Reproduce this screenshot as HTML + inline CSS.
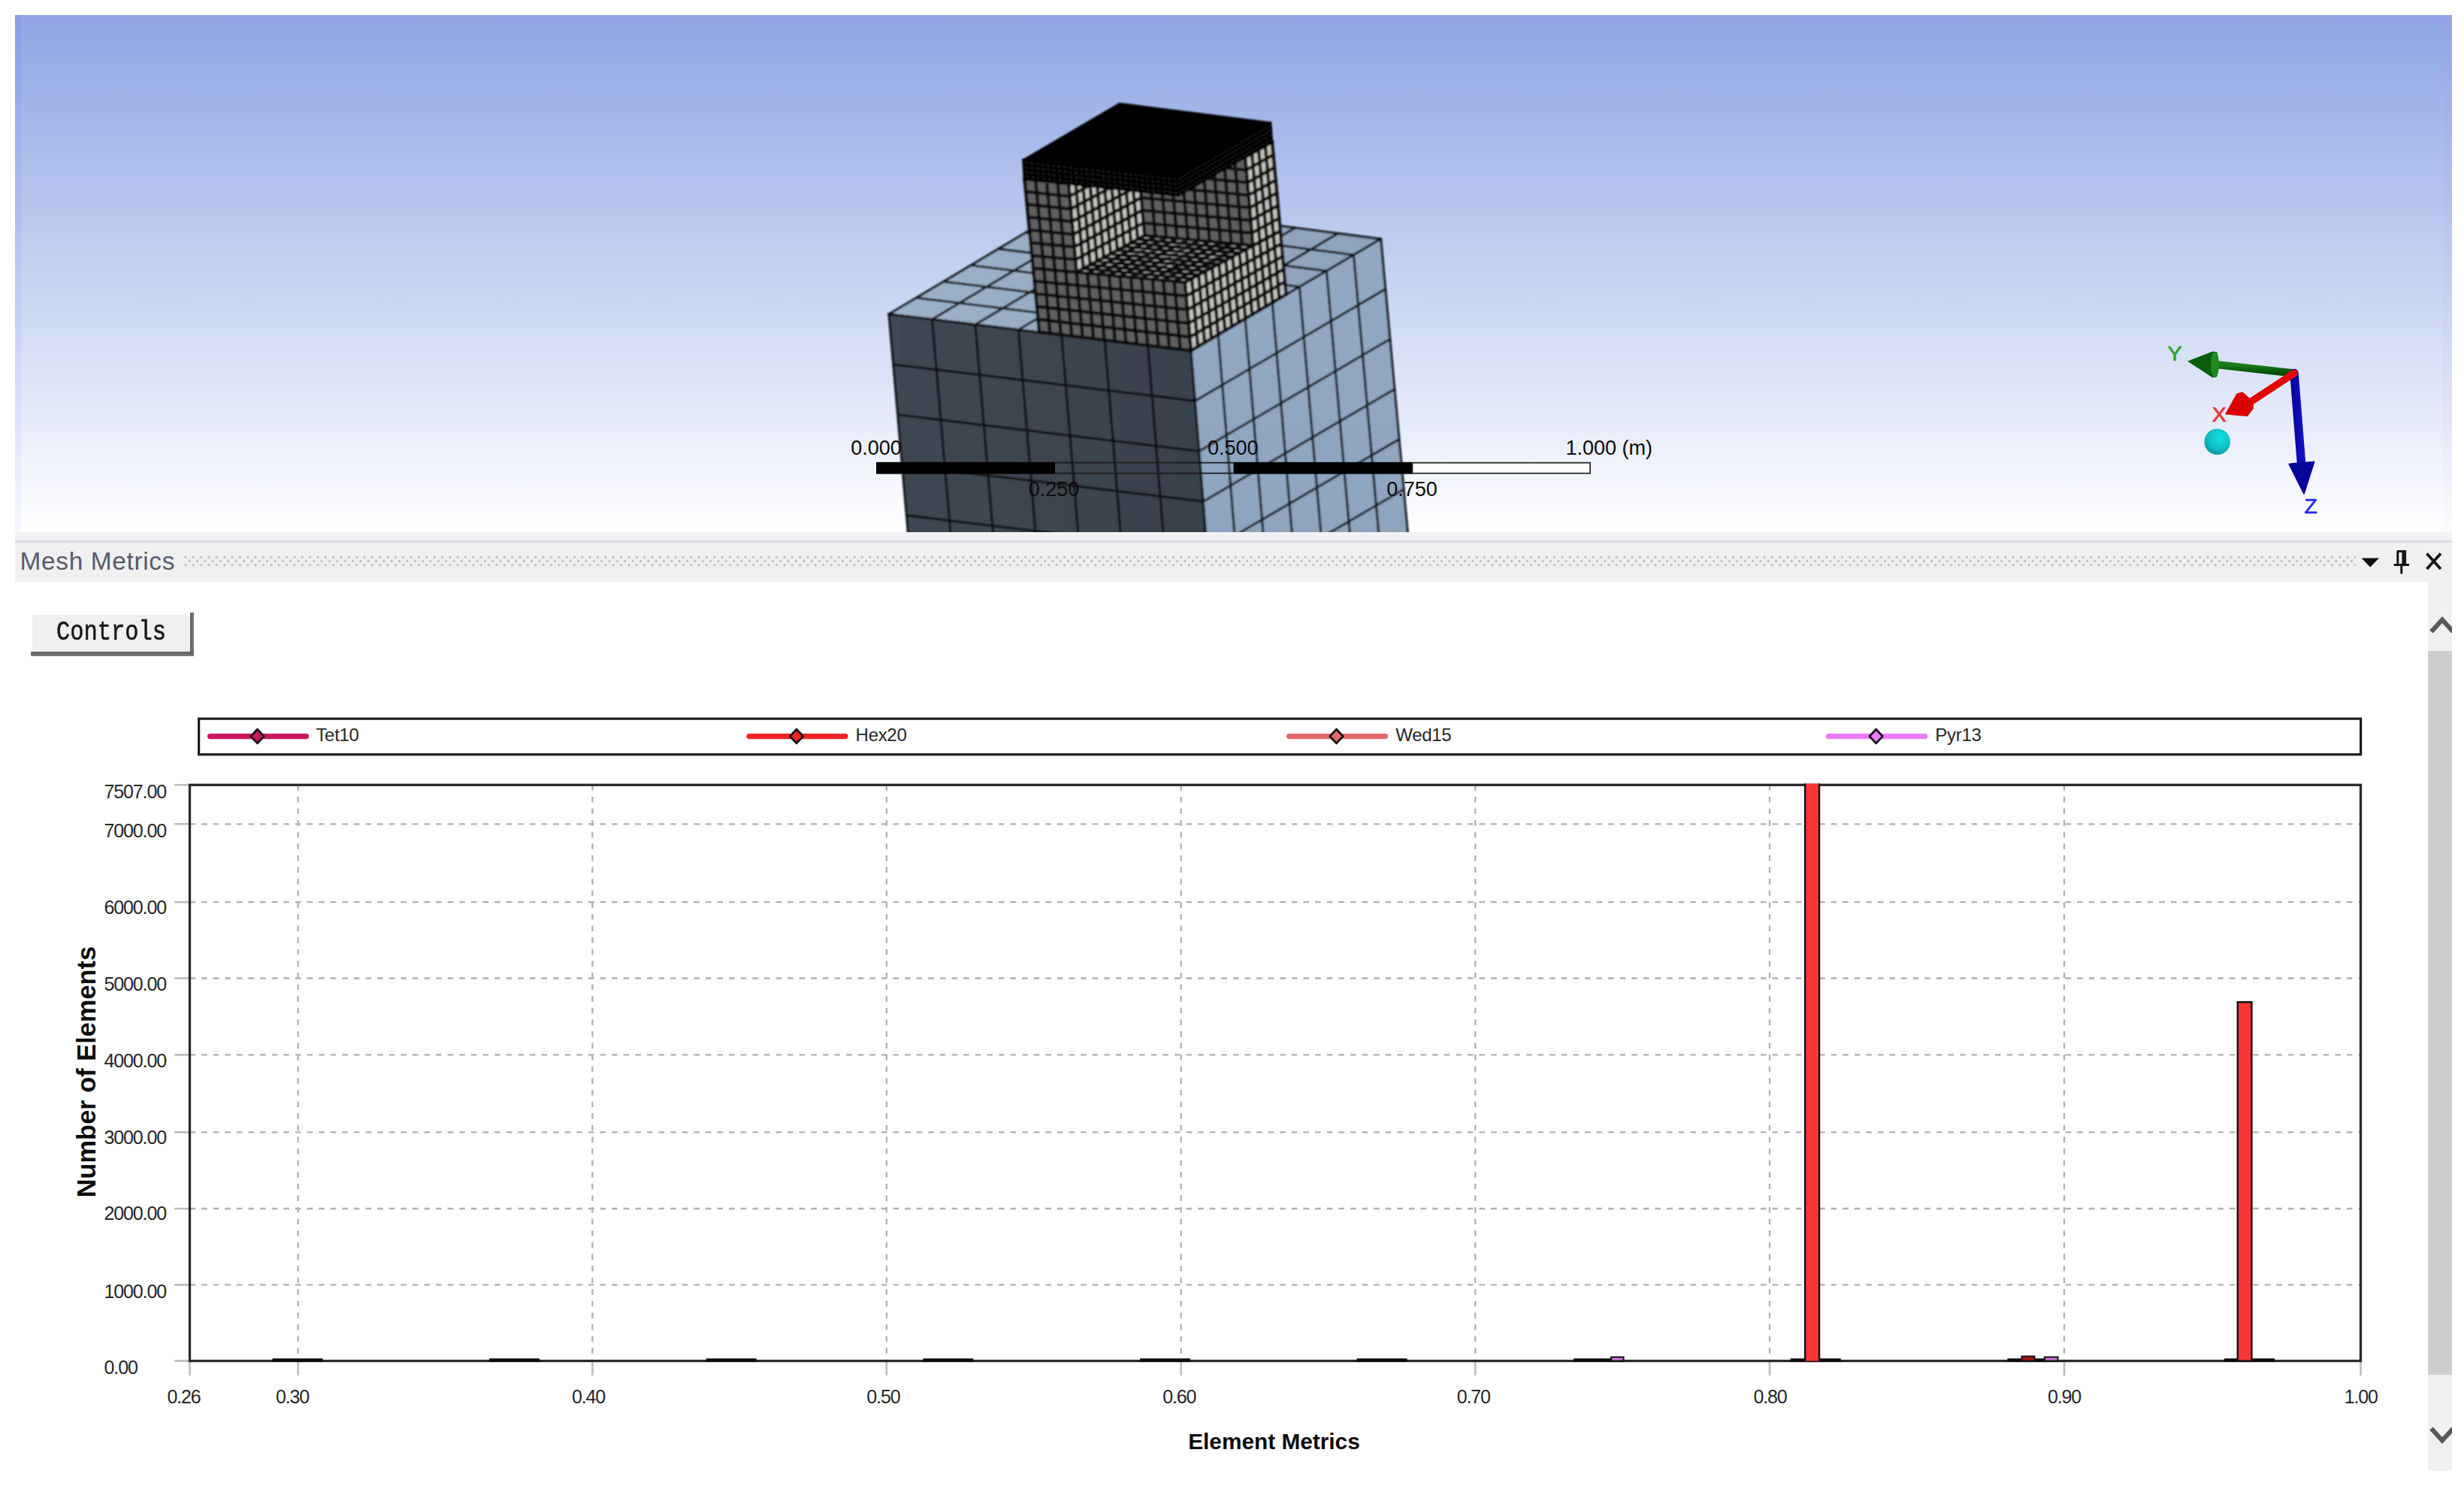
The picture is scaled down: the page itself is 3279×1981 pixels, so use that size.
<!DOCTYPE html>
<html lang="en">
<head>
<meta charset="utf-8">
<title>Mesh Metrics</title>
<style>
html,body{margin:0;padding:0;background:#fff;}
body{width:3279px;height:1981px;position:relative;overflow:hidden;font-family:"Liberation Sans",sans-serif;color:#1a1a1a;}
.abs{position:absolute;}
#viewport{left:20px;top:20px;width:3243px;height:688px;background:linear-gradient(180deg,#8da5e4 0%,#ffffff 100%);overflow:hidden;}
#gfx{left:0;top:0;width:3279px;height:1981px;}
.sb{font-size:27px;line-height:27px;color:#0b0b0b;white-space:nowrap;transform:translateX(-50%);}
.sbl{font-size:27px;line-height:27px;color:#0b0b0b;white-space:nowrap;}
.ax{font-size:29px;line-height:29px;font-weight:bold;white-space:nowrap;}
#titlebar{left:20px;top:708px;width:3243px;height:66px;background:#f0f0f1;}
#titlebar .strip{left:0;top:0;width:100%;height:12px;background:#f2f2f5;}
#titlebar .rule{left:0;top:11.2px;width:100%;height:2.6px;background:#d9dae4;}
#title{left:6.6px;top:21.1px;font-size:33.4px;line-height:36px;letter-spacing:0.66px;color:#565b6d;white-space:nowrap;}
#grip{left:224.6px;top:32px;width:2890px;height:15px;}
#panel{left:20px;top:774px;width:3211px;height:1183px;background:#fff;}
#controls{left:43.2px;top:817.8px;width:209.5px;height:49.2px;background:#efefef;}
#controls span{position:absolute;left:31.8px;top:6.6px;font-family:"Liberation Mono",monospace;font-weight:normal;-webkit-text-stroke:0.5px #161616;font-size:30.4px;line-height:34px;color:#161616;transform-origin:0 50%;transform:scaleY(1.2);white-space:nowrap;}
#csr{left:252.7px;top:815.4px;width:5.2px;height:57.2px;background:linear-gradient(90deg,#5e5e5e,#7c7c7c);}
#csb{left:41.4px;top:867px;width:216.5px;height:5.6px;background:linear-gradient(180deg,#5e5e5e,#7c7c7c);}
#scroll{left:3231px;top:774px;width:32px;height:1183px;background:#f0f0f0;}
#thumb{left:0;top:92px;width:32px;height:963px;background:#cdcdcd;}
.yl{left:138.6px;font-size:25px;line-height:25px;letter-spacing:-1.15px;color:#262626;white-space:nowrap;}
.xl{top:1845.6px;font-size:25px;line-height:25px;letter-spacing:-1.15px;color:#262626;white-space:nowrap;transform:translateX(-50%);}
.lg{top:966.2px;font-size:24px;line-height:24px;letter-spacing:-0.3px;color:#262626;white-space:nowrap;}
#ytitle{left:0;top:0;font-size:34.4px;line-height:34px;font-weight:bold;color:#0c0c0c;white-space:nowrap;transform-origin:0 0;}
#xtitle{left:1581.2px;top:1902px;font-size:29.8px;line-height:32px;font-weight:bold;color:#0c0c0c;white-space:nowrap;}
.tl{font-weight:normal;font-size:28.5px;line-height:28px;-webkit-text-stroke:0.7px currentColor;}
</style>
</head>
<body>

<div id="viewport" class="abs"><div class="abs" style="left:0;top:0;width:100%;height:10px;background:rgba(186,150,240,0.17)"></div><div class="abs" style="left:0;top:0;width:8px;height:100%;background:linear-gradient(180deg,rgba(112,120,232,0.16),rgba(112,120,232,0.05))"></div><div class="abs" style="right:0;top:0;width:12px;height:100%;background:linear-gradient(180deg,rgba(176,150,240,0.16),rgba(176,150,240,0.04))"></div></div>
<div id="titlebar" class="abs"><div class="abs strip"></div><div class="abs rule"></div>
<div id="title" class="abs">Mesh Metrics</div>
<svg id="grip" class="abs" viewBox="0 0 2890 15"><defs><pattern id="dots" width="10.35" height="10.4" patternUnits="userSpaceOnUse"><rect x="0.6" y="0" width="2.7" height="2.7" fill="#b4b4bc"/><rect x="5.8" y="5.2" width="2.7" height="2.7" fill="#b4b4bc"/></pattern></defs><rect x="0" y="0" width="2890" height="13.2" fill="url(#dots)"/></svg>
</div>
<div id="panel" class="abs"></div>
<div id="scroll" class="abs"><div id="thumb" class="abs"></div></div>
<svg id="gfx" class="abs" viewBox="0 0 3279 1981">
<defs>
<linearGradient id="gTop" x1="0" y1="0" x2="1" y2="0"><stop offset="0" stop-color="#9db2c8"/><stop offset="1" stop-color="#8ea2b9"/></linearGradient>
<linearGradient id="gFront" x1="0" y1="0" x2="1" y2="0"><stop offset="0" stop-color="#3f4852"/><stop offset="1" stop-color="#39424c"/></linearGradient>
<linearGradient id="gRight" x1="0" y1="0" x2="0" y2="1"><stop offset="0" stop-color="#93a8c2"/><stop offset="1" stop-color="#8ea4be"/></linearGradient>

<clipPath id="vp"><rect x="20" y="20" width="3243" height="687.9"/></clipPath>
<clipPath id="sbc"><rect x="3231" y="774" width="32" height="1183"/></clipPath>
<filter id="soft" x="-2%" y="-2%" width="104%" height="104%"><feGaussianBlur stdDeviation="0.85"/></filter>
<linearGradient id="gGreen" x1="0" y1="0" x2="0" y2="1"><stop offset="0" stop-color="#1c7e1c"/><stop offset="1" stop-color="#064f06"/></linearGradient>
<linearGradient id="gBlue" x1="0" y1="0" x2="1" y2="0"><stop offset="0" stop-color="#0505a0"/><stop offset="1" stop-color="#1212c2"/></linearGradient>
<radialGradient id="gCyan" cx="0.6" cy="0.35" r="0.75"><stop offset="0" stop-color="#14e0e6"/><stop offset="0.55" stop-color="#10c0c6"/><stop offset="1" stop-color="#0a8f96"/></radialGradient>
</defs>
<g clip-path="url(#vp)">
<g filter="url(#soft)"><polygon points="1183.0,418.0 1585.0,466.5 1837.5,318.0 1438.0,266.0" fill="url(#gTop)" />
<path d="M1183.0,418.0L1438.0,266.0M1240.4,424.9L1495.1,273.4M1297.9,431.9L1552.1,280.9M1355.3,438.8L1609.2,288.3M1412.7,445.7L1666.3,295.7M1470.1,452.6L1723.4,303.1M1527.6,459.6L1780.4,310.6M1585.0,466.5L1837.5,318.0M1183.0,418.0L1585.0,466.5M1219.4,396.3L1621.1,445.3M1255.9,374.6L1657.1,424.1M1292.3,352.9L1693.2,402.9M1328.7,331.1L1729.3,381.6M1365.1,309.4L1765.4,360.4M1401.6,287.7L1801.4,339.2M1438.0,266.0L1837.5,318.0" stroke="#070b10" stroke-width="3.0" fill="none" stroke-linecap="square"/>
<polygon points="1183.0,418.0 1585.0,466.5 1617.4,867.9 1218.1,819.4" fill="url(#gFront)" />
<path d="M1183.0,418.0L1218.1,819.4M1240.4,424.9L1275.1,826.3M1297.9,431.9L1332.2,833.3M1355.3,438.8L1389.2,840.2M1412.7,445.7L1446.3,847.1M1470.1,452.6L1503.3,854.0M1527.6,459.6L1560.4,861.0M1585.0,466.5L1617.4,867.9M1183.0,418.0L1585.0,466.5M1188.8,484.9L1590.4,533.4M1194.7,551.8L1595.8,600.3M1200.5,618.7L1601.2,667.2M1206.4,685.6L1606.6,734.1M1212.2,752.5L1612.0,801.0M1218.1,819.4L1617.4,867.9" stroke="#070b10" stroke-width="3.0" fill="none" stroke-linecap="square"/>
<polygon points="1585.0,466.5 1837.5,318.0 1874.1,717.6 1617.4,867.9" fill="url(#gRight)" />
<path d="M1585.0,466.5L1617.4,867.9M1621.1,445.3L1654.1,846.4M1657.1,424.1L1690.7,825.0M1693.2,402.9L1727.4,803.5M1729.3,381.6L1764.1,782.0M1765.4,360.4L1800.8,760.5M1801.4,339.2L1837.4,739.1M1837.5,318.0L1874.1,717.6M1585.0,466.5L1837.5,318.0M1590.4,533.4L1843.6,384.6M1595.8,600.3L1849.7,451.2M1601.2,667.2L1855.8,517.8M1606.6,734.1L1861.9,584.4M1612.0,801.0L1868.0,651.0M1617.4,867.9L1874.1,717.6" stroke="#070b10" stroke-width="3.0" fill="none" stroke-linecap="square"/>
<polygon points="1512.5,195.6 1657.2,209.3 1667.5,326.8 1523.1,313.5" fill="#616161" />
<path d="M1512.5,195.6L1523.1,313.5M1527.0,196.9L1537.5,314.8M1541.4,198.3L1552.0,316.1M1555.9,199.7L1566.4,317.5M1570.4,201.1L1580.9,318.8M1584.8,202.4L1595.3,320.1M1599.3,203.8L1609.7,321.5M1613.8,205.2L1624.2,322.8M1628.2,206.5L1638.6,324.1M1642.7,207.9L1653.0,325.5M1657.2,209.3L1667.5,326.8M1512.5,195.6L1657.2,209.3M1514.0,212.4L1658.6,226.1M1515.5,229.3L1660.1,242.9M1517.0,246.1L1661.6,259.6M1518.6,263.0L1663.1,276.4M1520.1,279.8L1664.5,293.2M1521.6,296.6L1666.0,310.0M1523.1,313.5L1667.5,326.8" stroke="#0e0e0e" stroke-width="4.4" fill="none" stroke-linecap="square"/>
<polygon points="1422.0,244.3 1512.5,195.6 1523.1,313.5 1432.6,362.2" fill="#c4c4bf" />
<path d="M1422.0,244.3L1432.6,362.2M1431.1,239.4L1441.7,357.3M1440.1,234.5L1450.7,352.5M1449.2,229.7L1459.8,347.6M1458.2,224.8L1468.8,342.7M1467.3,219.9L1477.9,337.8M1476.3,215.1L1486.9,333.0M1485.3,210.2L1496.0,328.1M1494.4,205.3L1505.0,323.2M1503.4,200.4L1514.1,318.4M1512.5,195.6L1523.1,313.5M1422.0,244.3L1512.5,195.6M1423.5,261.1L1514.0,212.4M1425.0,278.0L1515.5,229.3M1426.6,294.8L1517.0,246.1M1428.1,311.7L1518.6,263.0M1429.6,328.5L1520.1,279.8M1431.1,345.4L1521.6,296.6M1432.6,362.2L1523.1,313.5" stroke="#0e0e0e" stroke-width="4.4" fill="none" stroke-linecap="square"/>
<polygon points="1432.6,362.2 1523.1,313.5 1667.5,326.8 1577.0,375.5" fill="#bebebb" />
<path d="M1432.6,362.2L1577.0,375.5M1441.7,357.3L1586.0,370.6M1450.7,352.5L1595.1,365.8M1459.8,347.6L1604.1,360.9M1468.8,342.7L1613.2,356.0M1477.9,337.8L1622.2,351.1M1486.9,333.0L1631.3,346.3M1496.0,328.1L1640.3,341.4M1505.0,323.2L1649.4,336.5M1514.1,318.4L1658.4,331.7M1523.1,313.5L1667.5,326.8M1432.6,362.2L1523.1,313.5M1447.1,363.5L1537.5,314.8M1461.5,364.9L1552.0,316.1M1475.9,366.2L1566.4,317.5M1490.4,367.5L1580.9,318.8M1504.8,368.9L1595.3,320.1M1519.2,370.2L1609.7,321.5M1533.7,371.5L1624.2,322.8M1548.1,372.8L1638.6,324.1M1562.6,374.2L1653.0,325.5M1577.0,375.5L1667.5,326.8" stroke="#0e0e0e" stroke-width="4.4" fill="none" stroke-linecap="square"/>
<polygon points="1363.5,238.0 1422.0,244.3 1432.6,362.2 1374.9,356.9" fill="#616161" />
<path d="M1363.5,238.0L1374.9,356.9M1378.1,239.6L1389.3,358.2M1392.8,241.1L1403.8,359.5M1407.4,242.7L1418.2,360.9M1422.0,244.3L1432.6,362.2M1363.5,238.0L1422.0,244.3M1365.1,255.0L1423.5,261.1M1366.8,272.0L1425.0,278.0M1368.4,288.9L1426.6,294.8M1370.0,305.9L1428.1,311.7M1371.6,322.9L1429.6,328.5M1373.2,339.9L1431.1,345.4M1374.9,356.9L1432.6,362.2" stroke="#0e0e0e" stroke-width="4.4" fill="none" stroke-linecap="square"/>
<polygon points="1374.9,356.9 1577.0,375.5 1585.0,466.5 1383.0,441.8" fill="#616161" />
<path d="M1374.9,356.9L1383.0,441.8M1389.3,358.2L1397.4,443.6M1403.8,359.5L1411.9,445.3M1418.2,360.9L1426.3,447.1M1432.6,362.2L1440.7,448.9M1447.1,363.5L1455.1,450.6M1461.5,364.9L1469.6,452.4M1475.9,366.2L1484.0,454.1M1490.4,367.5L1498.4,455.9M1504.8,368.9L1512.9,457.7M1519.2,370.2L1527.3,459.4M1533.7,371.5L1541.7,461.2M1548.1,372.8L1556.1,463.0M1562.6,374.2L1570.6,464.7M1577.0,375.5L1585.0,466.5M1374.9,356.9L1577.0,375.5M1376.5,373.9L1578.6,393.7M1378.1,390.9L1580.2,411.9M1379.8,407.8L1581.8,430.1M1381.4,424.8L1583.4,448.3M1383.0,441.8L1585.0,466.5" stroke="#0e0e0e" stroke-width="4.4" fill="none" stroke-linecap="square"/>
<polygon points="1577.0,375.5 1703.7,307.3 1711.5,391.8 1585.0,466.5" fill="#c4c4bf" />
<path d="M1577.0,375.5L1585.0,466.5M1586.0,370.6L1594.0,461.2M1595.1,365.8L1603.1,455.8M1604.1,360.9L1612.1,450.5M1613.2,356.0L1621.1,445.2M1622.2,351.1L1630.2,439.8M1631.3,346.3L1639.2,434.5M1640.3,341.4L1648.2,429.1M1649.4,336.5L1657.3,423.8M1658.4,331.7L1666.3,418.5M1667.5,326.8L1675.4,413.1M1676.5,321.9L1684.4,407.8M1685.6,317.0L1693.4,402.5M1694.6,312.2L1702.5,397.1M1703.7,307.3L1711.5,391.8M1577.0,375.5L1703.7,307.3M1578.6,393.7L1705.2,324.2M1580.2,411.9L1706.8,341.1M1581.8,430.1L1708.4,358.0M1583.4,448.3L1709.9,374.9M1585.0,466.5L1711.5,391.8" stroke="#0e0e0e" stroke-width="4.4" fill="none" stroke-linecap="square"/>
<polygon points="1657.2,209.3 1692.7,189.0 1703.7,307.3 1667.5,326.8" fill="#c4c4bf" />
<path d="M1657.2,209.3L1667.5,326.8M1666.0,204.2L1676.5,321.9M1674.9,199.1L1685.6,317.0M1683.8,194.1L1694.6,312.2M1692.7,189.0L1703.7,307.3M1657.2,209.3L1692.7,189.0M1658.6,226.1L1694.3,205.9M1660.1,242.9L1695.8,222.8M1661.6,259.6L1697.4,239.7M1663.1,276.4L1699.0,256.6M1664.5,293.2L1700.5,273.5M1666.0,310.0L1702.1,290.4M1667.5,326.8L1703.7,307.3" stroke="#0e0e0e" stroke-width="4.4" fill="none" stroke-linecap="square"/>
<polygon points="1362.0,213.0 1566.5,236.0 1568.3,260.0 1363.5,238.0" fill="#1d1d1d" />
<path d="M1362.0,213.0L1363.5,238.0M1369.3,213.8L1370.8,238.8M1376.6,214.6L1378.1,239.6M1383.9,215.5L1385.4,240.4M1391.2,216.3L1392.8,241.1M1398.5,217.1L1400.1,241.9M1405.8,217.9L1407.4,242.7M1413.1,218.8L1414.7,243.5M1420.4,219.6L1422.0,244.3M1427.7,220.4L1429.3,245.1M1435.0,221.2L1436.6,245.9M1442.3,222.0L1444.0,246.6M1449.6,222.9L1451.3,247.4M1456.9,223.7L1458.6,248.2M1464.2,224.5L1465.9,249.0M1471.6,225.3L1473.2,249.8M1478.9,226.1L1480.5,250.6M1486.2,227.0L1487.8,251.4M1493.5,227.8L1495.2,252.1M1500.8,228.6L1502.5,252.9M1508.1,229.4L1509.8,253.7M1515.4,230.2L1517.1,254.5M1522.7,231.1L1524.4,255.3M1530.0,231.9L1531.7,256.1M1537.3,232.7L1539.0,256.9M1544.6,233.5L1546.4,257.6M1551.9,234.4L1553.7,258.4M1559.2,235.2L1561.0,259.2M1566.5,236.0L1568.3,260.0M1362.0,213.0L1566.5,236.0M1362.4,219.2L1567.0,242.0M1362.8,225.5L1567.4,248.0M1363.1,231.8L1567.8,254.0M1363.5,238.0L1568.3,260.0" stroke="#050505" stroke-width="3.6" fill="none" stroke-linecap="square"/>
<polygon points="1566.5,236.0 1690.8,163.5 1692.7,189.0 1568.3,260.0" fill="#202020" />
<path d="M1566.5,236.0L1568.3,260.0M1570.9,233.4L1572.7,257.5M1575.4,230.8L1577.2,254.9M1579.8,228.2L1581.6,252.4M1584.3,225.6L1586.1,249.9M1588.7,223.1L1590.5,247.3M1593.1,220.5L1595.0,244.8M1597.6,217.9L1599.4,242.2M1602.0,215.3L1603.8,239.7M1606.5,212.7L1608.3,237.2M1610.9,210.1L1612.7,234.6M1615.3,207.5L1617.2,232.1M1619.8,204.9L1621.6,229.6M1624.2,202.3L1626.1,227.0M1628.7,199.8L1630.5,224.5M1633.1,197.2L1634.9,222.0M1637.5,194.6L1639.4,219.4M1642.0,192.0L1643.8,216.9M1646.4,189.4L1648.3,214.4M1650.8,186.8L1652.7,211.8M1655.3,184.2L1657.2,209.3M1659.7,181.6L1661.6,206.8M1664.2,179.0L1666.0,204.2M1668.6,176.4L1670.5,201.7M1673.0,173.9L1674.9,199.1M1677.5,171.3L1679.4,196.6M1681.9,168.7L1683.8,194.1M1686.4,166.1L1688.3,191.5M1690.8,163.5L1692.7,189.0M1566.5,236.0L1690.8,163.5M1567.0,242.0L1691.3,169.9M1567.4,248.0L1691.8,176.2M1567.8,254.0L1692.2,182.6M1568.3,260.0L1692.7,189.0" stroke="#050505" stroke-width="3.0" fill="none" stroke-linecap="square"/>
<polygon points="1362.0,213.0 1490.0,138.0 1690.8,163.5 1566.5,236.0" fill="#000" stroke="#000" stroke-width="3" stroke-linejoin="round"/></g>
<rect x="1166.0" y="614.8" width="238.0" height="15.8" fill="#000"/>
<rect x="1641.5" y="614.8" width="238.0" height="15.8" fill="#000"/>
<path d="M1404.0,615.7H1641.5M1404.0,629.7H1641.5" stroke="#1a1a1a" stroke-width="1.8"/>
<rect x="1879.5" y="615.7" width="236.6" height="14.0" fill="#fdfdff" stroke="#2a2a2a" stroke-width="1.8"/>
<path d="M3053.0,496.5L2946,484.6" stroke="url(#gGreen)" stroke-width="10.5" stroke-linecap="round"/>
<polygon points="2911,480.4 2944.5,467.5 2950.5,468.5 2953,485 2950.5,501 2944.5,502.5" fill="#0a5e0a"/>
<ellipse cx="2947.5" cy="485" rx="5.5" ry="17.2" fill="#1f8a1f"/>
<path d="M3053.0,496.5L3063,622" stroke="url(#gBlue)" stroke-width="11.5" stroke-linecap="round"/>
<polygon points="3046.5,617.5 3079.5,614.5 3066,656.5" fill="#06069a" stroke="#06069a" stroke-width="2" stroke-linejoin="round"/>
<path d="M3053.0,496.5L2993,536" stroke="#e30505" stroke-width="9.5" stroke-linecap="round"/>
<polygon points="2962.5,550.6 2977,524.5 2984,522.5 2997.5,534.5 2998,543 2990.5,553" fill="#dc0000" stroke="#dc0000" stroke-width="2" stroke-linejoin="round"/>
<circle cx="2950.7" cy="587.8" r="17.3" fill="url(#gCyan)"/>
</g>
<path d="M252.5,1709.4H3141.5M252.5,1608.0H3141.5M252.5,1506.4H3141.5M252.5,1403.4H3141.5M252.5,1301.5H3141.5M252.5,1200.2H3141.5M252.5,1096.3H3141.5" stroke="#b0b0b0" stroke-width="2.3" stroke-dasharray="7.6 8" fill="none"/>
<path d="M396.7,1044.3V1810.6M788.4,1044.3V1810.6M1179.8,1044.3V1810.6M1571.7,1044.3V1810.6M1963.2,1044.3V1810.6M2355.0,1044.3V1810.6M2747.0,1044.3V1810.6" stroke="#b0b0b0" stroke-width="2.3" stroke-dasharray="7.6 8" fill="none"/>
<path d="M232.0,1810.6H252.5M232.0,1709.4H252.5M232.0,1608.0H252.5M232.0,1506.4H252.5M232.0,1403.4H252.5M232.0,1301.5H252.5M232.0,1200.2H252.5M232.0,1096.3H252.5M232.0,1044.3H252.5M252.5,1810.6V1830.0M396.7,1810.6V1830.0M788.4,1810.6V1830.0M1179.8,1810.6V1830.0M1571.7,1810.6V1830.0M1963.2,1810.6V1830.0M2355.0,1810.6V1830.0M2747.0,1810.6V1830.0M3141.5,1810.6V1830.0" stroke="#bdbdbd" stroke-width="2.6" fill="none"/>
<rect x="252.5" y="1044.3" width="2889.0" height="766.3" fill="none" stroke="#2a2a2a" stroke-width="3.3"/>
<rect x="362.5" y="1807.3" width="67" height="4.6" fill="#0a0a0a"/>
<rect x="651.1" y="1807.3" width="67" height="4.6" fill="#0a0a0a"/>
<rect x="939.7" y="1807.3" width="67" height="4.6" fill="#0a0a0a"/>
<rect x="1228.3" y="1807.3" width="67" height="4.6" fill="#0a0a0a"/>
<rect x="1516.9" y="1807.3" width="67" height="4.6" fill="#0a0a0a"/>
<rect x="1805.5" y="1807.3" width="67" height="4.6" fill="#0a0a0a"/>
<rect x="2094.1" y="1807.3" width="67" height="4.6" fill="#0a0a0a"/>
<rect x="2382.7" y="1807.3" width="67" height="4.6" fill="#0a0a0a"/>
<rect x="2671.3" y="1807.3" width="67" height="4.6" fill="#0a0a0a"/>
<rect x="2959.9" y="1807.3" width="67" height="4.6" fill="#0a0a0a"/>
<rect x="2402.1" y="1042.6" width="18.9" height="768.0" fill="#f93636"/>
<path d="M2402.1,1042.6V1810.6M2421,1042.6V1810.6" stroke="#111" stroke-width="2.4" fill="none"/>
<rect x="2977.8" y="1333.2" width="18.6" height="477.4" fill="#f93636" stroke="#111" stroke-width="2.4"/>
<rect x="2690.5" y="1804.5" width="17.0" height="6.1" fill="#b01010" stroke="#111" stroke-width="2"/>
<rect x="2720.8" y="1805.5" width="17.8" height="5.1" fill="#d070e0" stroke="#111" stroke-width="2"/>
<rect x="2144.0" y="1805.5" width="16.6" height="5.1" fill="#d070e0" stroke="#111" stroke-width="2"/>
<rect x="264.6" y="956.2" width="2877.0" height="47.6" fill="#fff" stroke="#1c1c1c" stroke-width="3.2"/>
<path d="M279.5,979.6H407.5" stroke="#c8185c" stroke-width="7.2" stroke-linecap="round"/>
<path d="M342.5,970.3L351.3,979.6L342.5,988.9L333.7,979.6Z" fill="#c8185c" stroke="#111" stroke-width="2.8" stroke-linejoin="round"/>
<path d="M997.0,979.6H1125.0" stroke="#f02424" stroke-width="7.2" stroke-linecap="round"/>
<path d="M1060.0,970.3L1068.8,979.6L1060.0,988.9L1051.2,979.6Z" fill="#f02424" stroke="#111" stroke-width="2.8" stroke-linejoin="round"/>
<path d="M1715.5,979.6H1843.5" stroke="#e26a6a" stroke-width="7.2" stroke-linecap="round"/>
<path d="M1778.5,970.3L1787.3,979.6L1778.5,988.9L1769.7,979.6Z" fill="#e26a6a" stroke="#111" stroke-width="2.8" stroke-linejoin="round"/>
<path d="M2433.6,979.6H2561.6" stroke="#ea7cf8" stroke-width="7.2" stroke-linecap="round"/>
<path d="M2496.6,970.3L2505.4,979.6L2496.6,988.9L2487.8,979.6Z" fill="#ea7cf8" stroke="#111" stroke-width="2.8" stroke-linejoin="round"/>
<polygon points="3142.5,742.5 3166,742.5 3154.2,754.5" fill="#111"/>
<path d="M3189.8,733.4H3202M3190.8,733.4V751.5M3200.6,733.4V751.5M3185.6,751.4H3206M3195.8,751.5V763.6" stroke="#15151c" stroke-width="3" fill="none"/><rect x="3196.4" y="734" width="4.4" height="17" fill="#15151c"/>
<path d="M3229.5,736.5L3248,757M3248,736.5L3229.5,757" stroke="#15151c" stroke-width="3.8" fill="none"/>
<g clip-path="url(#sbc)"><path d="M3235.5,840.5L3250,824.5L3264.5,840.5" stroke="#595959" stroke-width="6.2" fill="none"/>
<path d="M3235.5,1900.5L3250,1916.5L3264.5,1900.5" stroke="#595959" stroke-width="6.2" fill="none"/></g>
</svg>
<div class="abs sb" style="left:1166.0px;top:582.8px">0.000</div>
<div class="abs sb" style="left:1640.8px;top:582.8px">0.500</div>
<div class="abs sb" style="left:1402.6px;top:637.5px">0.250</div>
<div class="abs sb" style="left:1879.0px;top:637.5px">0.750</div>
<div class="abs sbl" style="left:2083.5px;top:582.8px">1.000 (m)</div>
<div class="abs tl" style="left:2884.5px;top:455.5px;color:#2aa62a">Y</div>
<div class="abs tl" style="left:2943.8px;top:536.8px;color:#f03030">X</div>
<div class="abs tl" style="left:3066.5px;top:659px;color:#2828e8">Z</div>
<div id="controls" class="abs"><span>Controls</span></div><div id="csr" class="abs"></div><div id="csb" class="abs"></div>
<div class="abs lg" style="left:420.4px">Tet10</div>
<div class="abs lg" style="left:1138.6px">Hex20</div>
<div class="abs lg" style="left:1857.3px">Wed15</div>
<div class="abs lg" style="left:2575.3px">Pyr13</div>
<div class="abs yl" style="top:1806.9px">0.00</div>
<div class="abs yl" style="top:1706.0px">1000.00</div>
<div class="abs yl" style="top:1602.1px">2000.00</div>
<div class="abs yl" style="top:1500.5px">3000.00</div>
<div class="abs yl" style="top:1399.3px">4000.00</div>
<div class="abs yl" style="top:1297.3px">5000.00</div>
<div class="abs yl" style="top:1194.5px">6000.00</div>
<div class="abs yl" style="top:1093.2px">7000.00</div>
<div class="abs yl" style="top:1041.2px">7507.00</div>
<div class="abs xl" style="left:244.5px">0.26</div>
<div class="abs xl" style="left:389.1px">0.30</div>
<div class="abs xl" style="left:783.0px">0.40</div>
<div class="abs xl" style="left:1175.4px">0.50</div>
<div class="abs xl" style="left:1569.3px">0.60</div>
<div class="abs xl" style="left:1960.8px">0.70</div>
<div class="abs xl" style="left:2355.6px">0.80</div>
<div class="abs xl" style="left:2747.0px">0.90</div>
<div class="abs xl" style="left:3141.7px">1.00</div>
<div id="ytitle" class="abs" style="transform:translate(97.8px,1593.3px) rotate(-90deg)">Number of Elements</div>
<div id="xtitle" class="abs">Element Metrics</div>
</body>
</html>
